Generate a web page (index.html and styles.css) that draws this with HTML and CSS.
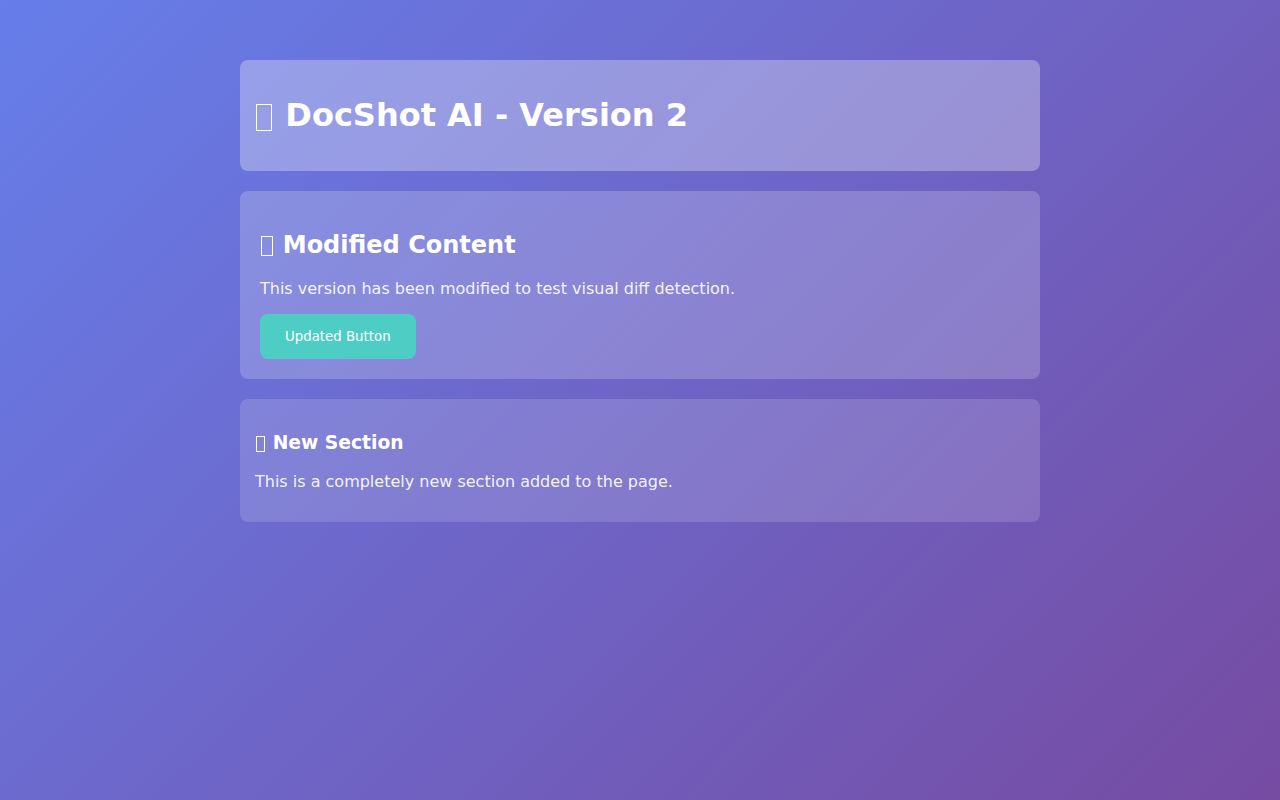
FILE: index.html
```html
<!DOCTYPE html>
<html lang="en">
<head>
<meta charset="utf-8">
<title>DocShot AI - Version 2</title>
<link rel="stylesheet" href="styles.css">
</head>
<body>
  <div class="container">
    <div class="header">
      <h1><span class="tofu" aria-hidden="true"></span> DocShot AI - Version 2</h1>
    </div>
    <div class="card card-main">
      <h2><span class="tofu" aria-hidden="true"></span> Modified Content</h2>
      <p>This version has been modified to test visual diff detection.</p>
      <button class="btn">Updated Button</button>
    </div>
    <div class="card card-new">
      <h3><span class="tofu" aria-hidden="true"></span> New Section</h3>
      <p>This is a completely new section added to the page.</p>
    </div>
  </div>
</body>
</html>
```
FILE: styles.css
```css
html, body {
  margin: 0;
  padding: 0;
}
body {
  min-height: 100vh;
  font-family: "DejaVu Sans", sans-serif;
  background: linear-gradient(135deg, #667eea 0%, #764ba2 100%);
  color: #ffffff;
}
.container {
  max-width: 800px;
  margin: 0 auto;
  padding-top: 60px;
  display: flex;
  flex-direction: column;
  gap: 20px;
}
.tofu {
  display: inline-block;
  box-sizing: border-box;
  width: 0.5em;
  height: 0.86em;
  margin-left: 0.03em;
  margin-right: 0.07em;
  border: 0.042em solid currentColor;
  vertical-align: -0.15em;
}
.header {
  background: rgba(255, 255, 255, 0.3);
  border-radius: 8px;
  padding: 15px;
}
.header h1 {
  font-size: 32px;
  font-weight: bold;
  margin: 21.44px 0;
}
.card {
  border-radius: 8px;
}
.card-main {
  background: rgba(255, 255, 255, 0.2);
  padding: 20px;
}
.card-main h2 {
  font-size: 24px;
  margin: 19.92px 0;
}
.card-main p {
  margin: 16px 0;
  color: rgba(255, 255, 255, 0.92);
  font-size: 16px;
}
.btn {
  display: inline-block;
  background: #4ecdc4;
  color: #ffffff;
  border: none;
  border-radius: 8px;
  padding: 15px 25px;
  font-family: "DejaVu Sans", sans-serif;
  font-size: 13.333px;
  cursor: pointer;
  vertical-align: top;
}
.card-new {
  background: rgba(255, 255, 255, 0.15);
  padding: 15px;
}
.card-new h3 {
  font-size: 18.72px;
  margin: 18.72px 0;
}
.card-new p {
  margin: 16px 0;
  color: rgba(255, 255, 255, 0.92);
  font-size: 16px;
}
```
